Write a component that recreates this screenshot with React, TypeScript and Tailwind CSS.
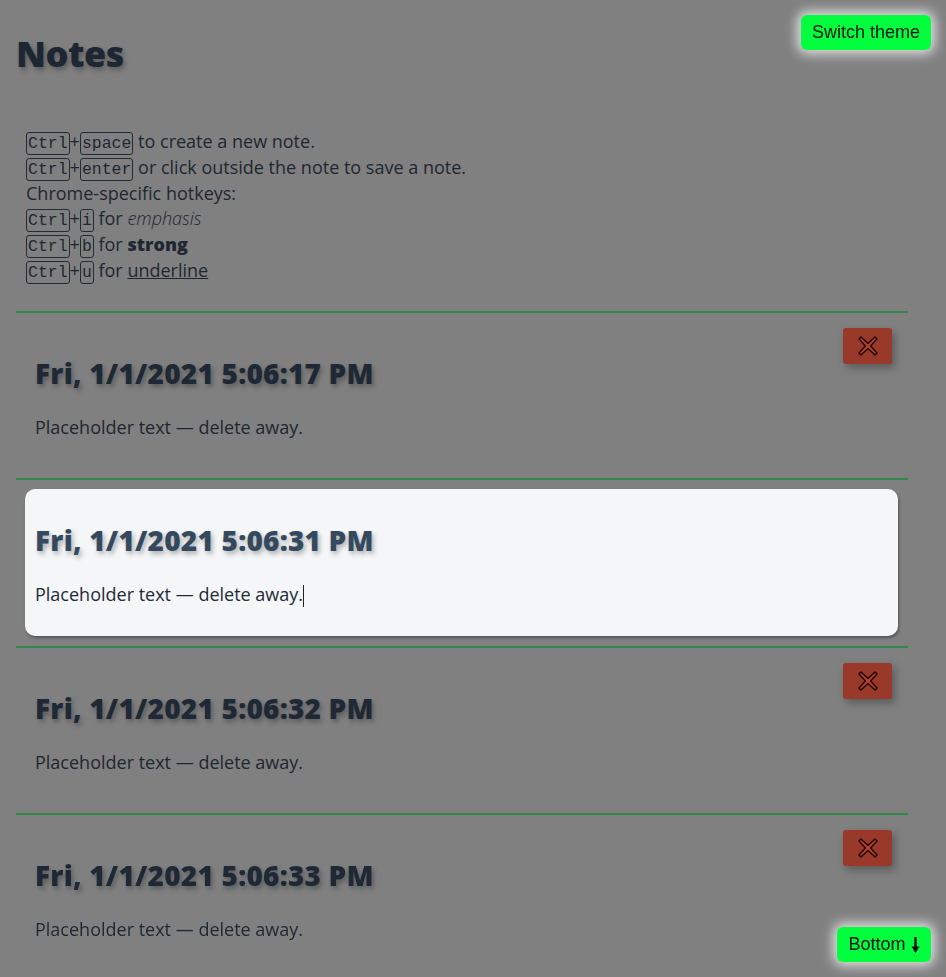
const notes = [
  { id: 1, date: "Fri, 1/1/2021 5:06:17 PM", editing: false },
  { id: 2, date: "Fri, 1/1/2021 5:06:31 PM", editing: true },
  { id: 3, date: "Fri, 1/1/2021 5:06:32 PM", editing: false },
  { id: 4, date: "Fri, 1/1/2021 5:06:33 PM", editing: false },
];

const Kbd = ({ children }: { children: React.ReactNode }) => (
  <kbd className="inline-block border border-[#222b33] rounded-[3px] px-[1px] leading-[21px] text-[16.5px] [font-family:'Liberation_Mono',monospace]">
    {children}
  </kbd>
);

const DeleteIcon = () => (
  <svg width="22" height="22" viewBox="0 0 22 22">
    <polygon
      points="4,2 11,8.5 18,2 20,4 13.5,11 20,18 18,20 11,13.5 4,20 2,18 8.5,11 2,4"
      fill="#c0402a"
      stroke="#1a0906"
      strokeWidth="1.4"
      strokeLinejoin="miter"
    />
  </svg>
);

export default function App() {
  return (
    <div className="min-h-[977px] bg-[#808080] text-[#1e2731] pl-4 pr-[38px] pb-10 [font-family:'Open_Sans','Noto_Sans',sans-serif]">
      {/* fixed buttons */}
      <button className="fixed top-[15px] right-[15px] h-[35px] w-[130px] rounded-[6px] bg-[#00ff3c] text-[18px] leading-[35px] text-[#111] shadow-[0_0_12px_4px_rgba(255,255,255,0.75)] [font-family:'Liberation_Sans',Arial,sans-serif]">
        Switch theme
      </button>
      <button className="fixed bottom-[15px] right-[15px] h-[35px] w-[94px] rounded-[6px] bg-[#00ff3c] text-[18px] text-[#111] shadow-[0_0_12px_4px_rgba(255,255,255,0.75)] flex items-center justify-center gap-[5px] [font-family:'Liberation_Sans',Arial,sans-serif]">
        Bottom
        <svg width="9" height="16" viewBox="0 0 9 16">
          <path d="M4.5 0 V12" stroke="#111" strokeWidth="2.4" />
          <path d="M0.5 9.5 L4.5 16 L8.5 9.5 Z" fill="#111" />
        </svg>
      </button>

      <h1 className="pt-[32px] text-[36px] leading-[44px] font-extrabold text-[#1c2733] tracking-[-0.5px] [text-shadow:2px_3px_5px_rgba(0,0,0,0.3)]">
        Notes
      </h1>

      {/* hotkey help */}
      <div className="mt-[53px] pl-[10px] text-[18px] leading-[25px]">
        <div><Kbd>Ctrl</Kbd>+<Kbd>space</Kbd> to create a new note.</div>
        <div><Kbd>Ctrl</Kbd>+<Kbd>enter</Kbd> or click outside the note to save a note.</div>
        <div>Chrome-specific hotkeys:</div>
        <div><Kbd>Ctrl</Kbd>+<Kbd>i</Kbd> for <em className="font-light text-[#1e2731]">emphasis</em></div>
        <div><Kbd>Ctrl</Kbd>+<Kbd>b</Kbd> for <strong className="font-extrabold">strong</strong></div>
        <div><Kbd>Ctrl</Kbd>+<Kbd>u</Kbd> for <u>underline</u></div>
      </div>

      <div className="mt-[27px]">
        {notes.map((n) => (
          <div key={n.id}>
            <div className="h-[2px] bg-[#33874a]" />
            <div
              className={
                n.editing
                  ? "relative mt-[9px] mb-[10px] ml-[9px] mr-[10px] p-[10px] rounded-[10px] bg-[#f5f6f8] text-[#1f2937] shadow-[1px_2px_3px_rgba(0,0,0,0.35)]"
                  : "relative mt-[9px] mb-[10px] ml-[9px] mr-[10px] p-[10px]"
              }
            >
              {!n.editing && (
                <button className="absolute top-[6px] right-[6px] w-[49px] h-[36px] rounded-[3px] bg-[#98392a] flex items-center justify-center shadow-[3px_4px_8px_rgba(0,0,0,0.3)]">
                  <DeleteIcon />
                </button>
              )}
              <h2
                className={
                  (n.editing ? "text-[#34495e] " : "text-[#1e2935] ") +
                  "mt-[24px] mb-[25px] text-[28px] leading-[34px] font-extrabold tracking-[0.2px] [text-shadow:2px_3px_5px_rgba(0,0,0,0.3)]"
                }
              >
                {n.date}
              </h2>
              <p className="mb-[19px] text-[18px] leading-[24px]">
                Placeholder text — delete away.
                {n.editing && <span className="inline-block w-px h-[22px] bg-[#222] align-middle" />}
              </p>
            </div>
          </div>
        ))}
      </div>
    </div>
  );
}
